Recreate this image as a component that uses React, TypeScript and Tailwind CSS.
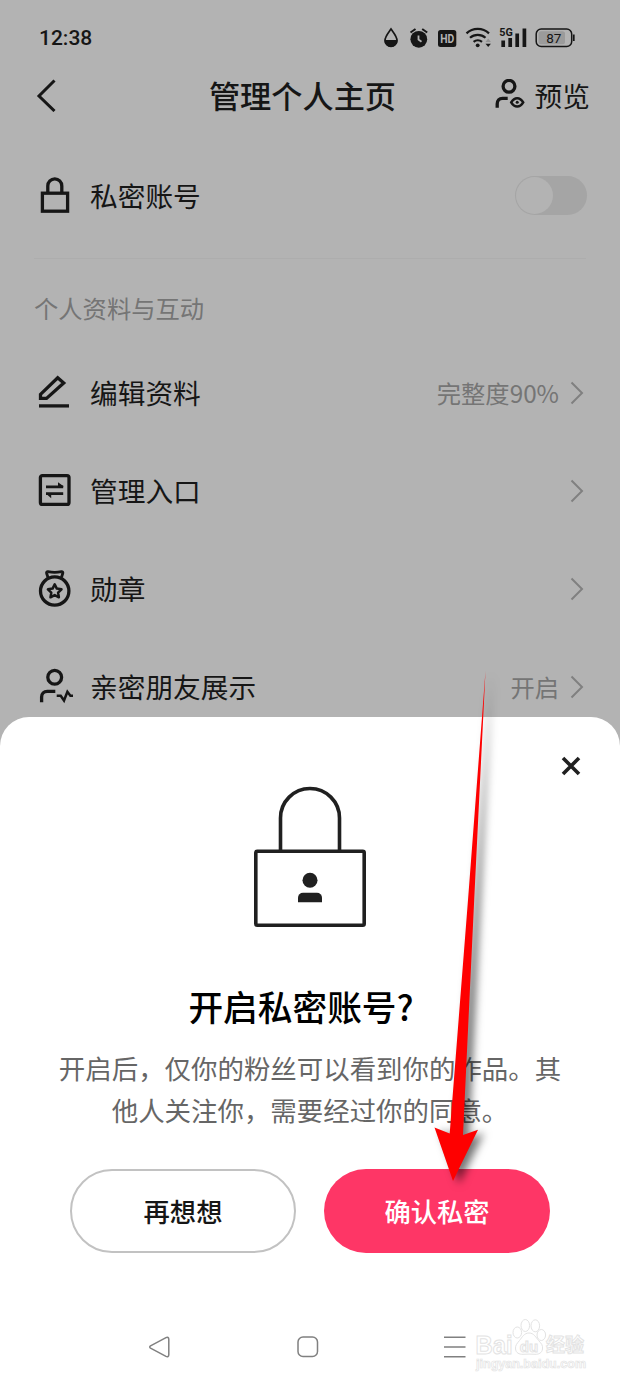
import type { ReactNode } from "react";

const iconProps = {
  width: 40,
  height: 40,
  viewBox: "0 0 40 40",
  fill: "none",
  stroke: "#161616",
  strokeWidth: 3.3,
};

function LockIcon() {
  return (
    <svg {...iconProps}>
      <rect x="8.4" y="17.2" width="25.2" height="18" />
      <path d="M13.8 17V9.9a7 7 0 0 1 14 0V17" />
    </svg>
  );
}

function EditIcon() {
  return (
    <svg {...iconProps}>
      <path d="M6.5 24.4v-4L23.7 3.8l6 5.2-17.2 15.4z" />
      <path d="M5 31.9h30" />
    </svg>
  );
}

function EntryIcon() {
  return (
    <svg {...iconProps}>
      <rect x="6.4" y="3.6" width="28.6" height="28.8" rx="2" />
      <path d="M12 14.8h17.2M12 21.6h17.2" strokeWidth="2.8" />
      <path d="M24 10.2l5.2 3.8v1H24zM17.2 26.2L12.4 22v-1h4.8z" fill="#161616" stroke="none" />
    </svg>
  );
}

function MedalIcon() {
  return (
    <svg {...iconProps} strokeLinejoin="round">
      <circle cx="20.7" cy="21" r="14.2" />
      <path d="M14 7.5l-1.4-4.3c-.3-1 .4-1.7 1.4-1.5 4.5.9 8.8.9 13.4 0 1-.2 1.7.5 1.4 1.5l-1.4 4.3" strokeWidth="2.8" />
      <path d="M20.7 14.3l2.1 4.3 4.7.7-3.4 3.3.8 4.7-4.2-2.2-4.2 2.2.8-4.7-3.4-3.3 4.7-.7z" strokeWidth="2.5" />
    </svg>
  );
}

function FriendIcon() {
  return (
    <svg {...iconProps}>
      <circle cx="20.7" cy="9.3" r="6.9" />
      <path d="M7.6 34.2V29c0-3.500 2.300-5.700 5.700-5.700h8" />
      <path d="M22.700 27.700h4l3.300 4.800 3.400-8.800 3 4h2.600" strokeWidth="2.500" />
    </svg>
  );
}

function PreviewIcon() {
  return (
    <svg {...iconProps} width={32} height={32} viewBox="0 0 32 32">
      <circle cx="15" cy="7.3" r="5.900" />
      <path d="M3.2 28.7V25c0-3.300 2-5.700 5.300-5.700h5.200" />
      <path d="M17.2 23.300c3.200-5.500 8.800-5.500 12 0-3.200 5.500-8.800 5.500-12 0z" strokeWidth="2.500" />
      <circle cx="23.2" cy="23.3" r="1.500" fill="#161616" stroke="none" />
    </svg>
  );
}

function ChevronRight() {
  return (
    <svg className="-mt-0.5" width="14" height="24" viewBox="0 0 14 24" fill="none" stroke="#808080" strokeWidth="2">
      <path d="M1.500 1.500L12 12 1.500 22.500" />
    </svg>
  );
}

function StatusIcons() {
  return (
    <svg width="200" height="30" viewBox="380 23 200 30" fill="none" stroke="#161616">
      {/* drop */}
      <path d="M391 29c-2.500 3.600-6 7.500-6 11.500a6 6 0 0 0 12 0c0-4-3.500-7.900-6-11.500z" strokeWidth="1.700" />
      <path d="M385 40.500h12a6 6 0 0 1-12 0z" fill="#161616" />
      {/* alarm */}
      <circle cx="418.800" cy="39.300" r="8.400" fill="#161616" stroke="none" />
      <path d="M410.500 32.500l5-3.500M427.200 32.500l-5-3.500" strokeWidth="2" />
      <path d="M418.500 35.500v4l3 2.300" stroke="#b3b3b3" strokeWidth="1.800" />
      {/* hd */}
      <rect x="438" y="30" width="18.300" height="17" rx="2.500" fill="#161616" stroke="none" />
      <text x="447.200" y="43" textAnchor="middle" fill="#b3b3b3" stroke="none" className="font-['Roboto'] text-[12px] font-bold" textLength="14" lengthAdjust="spacingAndGlyphs">HD</text>
      {/* wifi */}
      <path d="M466.500 33.400a16.500 16.500 0 0 1 22.500 0M470 37.800a11.500 11.500 0 0 1 15.500 0M473.600 41.800a6.500 6.500 0 0 1 8.400 0" strokeWidth="2.200" />
      <circle cx="477.700" cy="45.300" r="1.900" fill="#161616" stroke="none" />
      <path d="M485.500 42l2.700-3.500 2.700 3.500z" fill="#929292" stroke="none" />
      <path d="M485.500 43.800h5.400l-2.700 3.300z" fill="#161616" stroke="none" />
      {/* signal */}
      <path d="M503.200 40.500v6.500M510.200 38v9M517.200 33.500v13.500M524.400 28.500v18.500" strokeWidth="3.700" />
      <text x="499.300" y="36.300" fill="#161616" stroke="none" className="font-['Roboto'] text-[11.5px] font-bold" textLength="13.500" lengthAdjust="spacingAndGlyphs">5G</text>
      {/* battery */}
      <rect x="536.200" y="29" width="35.500" height="17.500" rx="5" strokeWidth="1.500" />
      <rect x="538.500" y="31.300" width="26.500" height="13" rx="2.500" fill="#9b9b9b" stroke="none" />
      <path d="M573.800 34.500v6.500" strokeWidth="1.700" />
      <text x="553.800" y="42.700" textAnchor="middle" fill="#161616" stroke="none" className="font-['Roboto'] text-[13.5px]">87</text>
    </svg>
  );
}

function Row({ icon, label, value }: { icon: ReactNode; label: string; value?: string }) {
  return (
    <div className="flex h-[98px] shrink-0 items-center">
      {icon}
      <span className="-mt-0.5 ml-4 text-[27.7px]">{label}</span>
      <div className="ml-auto mr-0.5 flex items-center gap-[11px] text-[24.3px] text-[#757575]">
        {value && <span className="-mt-0.5">{value}</span>}
        <ChevronRight />
      </div>
    </div>
  );
}

function LockArt() {
  return (
    <svg width="114" height="142" viewBox="0 0 114 142" fill="none" stroke="#202020" strokeWidth="3.6">
      <rect x="2.800" y="65.300" width="108.400" height="74" rx="1.500" />
      <path d="M27.500 65V32a29.500 29.500 0 0 1 59 0v33" />
      <circle cx="57" cy="94.200" r="7.500" fill="#202020" stroke="none" />
      <path d="M45 116.300v-4.500a5 5 0 0 1 5-5h14a5 5 0 0 1 5 5v4.500z" fill="#202020" stroke="none" />
    </svg>
  );
}

function Watermark() {
  return (
    <svg
      className="absolute left-[470px] top-[1314px]"
      width="120"
      height="62"
      viewBox="470 1314 120 62"
      fill="#fff"
      stroke="#e3e3e3"
      strokeWidth="1"
    >
      <text x="475.500" y="1354" className="font-['Liberation_Sans'] text-[25px] font-bold" textLength="37" lengthAdjust="spacingAndGlyphs">Bai</text>
      <ellipse cx="517.300" cy="1332.500" rx="4.300" ry="5.500" />
      <ellipse cx="525.300" cy="1325.500" rx="4.300" ry="6" />
      <ellipse cx="535.300" cy="1325.800" rx="4.300" ry="6" />
      <ellipse cx="541.300" cy="1335" rx="4.300" ry="5.500" />
      <path d="M529 1333c5 0 7 4.500 9.500 7.500 3 3 4.500 5 4 8.500-.5 4-4 5.500-7.500 5.300-4-.3-8-.3-12 0-4 .2-7-1.500-7.500-5.300-.4-3.500 1.500-5.500 4-8.500 2.500-3 4.500-7.500 9.500-7.500z" />
      <text x="529" y="1352" textAnchor="middle" className="font-['Liberation_Sans'] text-[15px] font-bold">du</text>
      <text x="546" y="1352" textLength="38" className="font-['Noto_Sans_CJK_SC'] text-[19px] font-bold">经验</text>
      <text x="476" y="1367.500" textLength="110" strokeWidth=".7" className="font-['Liberation_Sans'] text-[12.5px] font-bold">jingyan.baidu.com</text>
    </svg>
  );
}

function Pointer() {
  return (
    <svg
      className="pointer-events-none absolute left-[420px] top-[660px] [filter:drop-shadow(6px_3px_4px_rgba(0,0,0,0.55))]"
      width="90"
      height="540"
      viewBox="420 660 90 540"
    >
      <path d="M485.500 671L474.200 900 463 1135l15-5.300L453 1181l-18.500-53.500 15.200 6L468 900z" fill="#fe0000" />
    </svg>
  );
}

export default function App() {
  return (
    <div className="relative flex h-[1386px] w-[620px] flex-col overflow-hidden bg-white font-['Noto_Sans_CJK_SC',sans-serif] text-[#161616]">
      <div className="flex h-[746px] shrink-0 flex-col overflow-hidden bg-[#b3b3b3] px-[34px]">
        <div className="flex h-[76px] shrink-0 items-center justify-between">
          <span className="ml-[5px] mt-0.5 font-['Roboto'] text-[21px] font-medium">12:38</span>
          <div className="mr-1.5">
            <StatusIcons />
          </div>
        </div>

        <div className="grid h-[38px] shrink-0 grid-cols-[145px_1fr_160px] grid-rows-[38px] items-center">
          <svg width="24" height="34" viewBox="0 0 24 34" fill="none" stroke="#161616" strokeWidth="3">
            <path d="M20.500 2.500L5 18l15.500 15" />
          </svg>
          <h1 className="whitespace-nowrap text-center text-[31.2px] font-medium leading-[38px]">管理个人主页</h1>
          <div className="-mr-1 flex items-center justify-end gap-[9px]">
            <PreviewIcon />
            <span className="text-[27.7px] leading-[38px]">预览</span>
          </div>
        </div>

        <div className="mt-5 flex h-[125px] shrink-0 items-center border-b border-[#adadad]">
          <LockIcon />
          <span className="ml-4 text-[27.7px]">私密账号</span>
          <div className="-mr-px -mt-0.5 ml-auto flex h-[39px] w-[72px] items-center rounded-full bg-[#a5a5a5] p-px">
            <div className="size-[37px] rounded-full bg-[#b3b3b3]" />
          </div>
        </div>

        <div className="mt-[29px] flex h-10 shrink-0 items-center text-[24.3px] text-[#757575]">个人资料与互动</div>

        <div className="mt-[17px] flex flex-col">
          <Row icon={<EditIcon />} label="编辑资料" value="完整度90%" />
          <Row icon={<EntryIcon />} label="管理入口" />
          <Row icon={<MedalIcon />} label="勋章" />
          <Row icon={<FriendIcon />} label="亲密朋友展示" value="开启" />
        </div>
      </div>

      <div className="relative -mt-[29px] flex h-[669px] shrink-0 flex-col items-center rounded-t-[29px] bg-white">
        <div className="flex h-[69px] w-full shrink-0 items-end justify-end pr-[38px]">
          <svg width="22" height="40" viewBox="0 0 22 40" fill="none" stroke="#202020" strokeWidth="3.6">
            <path d="M3 12l16 16M19 12L3 28" />
          </svg>
        </div>
        <LockArt />
        <h2 className="mt-[52px] pr-[18px] text-[34.7px] font-medium leading-[52px] text-black">开启私密账号?</h2>
        <p className="mt-[15px] w-[520px] text-center text-[26.45px] leading-[42px] text-[#666]">
          开启后，仅你的粉丝可以看到你的作品。其
          <br />
          他人关注你，需要经过你的同意。
        </p>
        <div className="mt-[38px] flex gap-[28px] text-[26.3px] font-medium">
          <button className="h-[84px] w-[226px] rounded-full border-2 border-[#c2c2c2]">再想想</button>
          <button className="h-[84px] w-[226px] rounded-full bg-[#fe3666] text-white">确认私密</button>
        </div>
        <div className="mt-[82px] flex w-full items-center pl-[148px]">
          <svg width="24" height="24" viewBox="0 0 24 24" fill="none" stroke="#808080" strokeWidth="1.5" strokeLinejoin="round">
            <path d="M2.500 10.800L18 2.600c1.600-.8 2.800 0 2.800 1.600v15.600c0 1.600-1.200 2.400-2.800 1.600L2.500 13.200c-1-.7-1-1.700 0-2.400z" />
          </svg>
          <svg className="ml-[125px]" width="22" height="22" viewBox="0 0 22 22" fill="none" stroke="#808080" strokeWidth="1.5">
            <rect x="1" y="1" width="19.500" height="19.500" rx="5" />
          </svg>
          <svg className="ml-[125px]" width="22" height="24" viewBox="0 0 22 24" fill="none" stroke="#808080" strokeWidth="1.5">
            <path d="M0 2.200h21.500M0 12h21.500M0 21.800h21.500" />
          </svg>
        </div>
      </div>

      <Watermark />
      <Pointer />
    </div>
  );
}
